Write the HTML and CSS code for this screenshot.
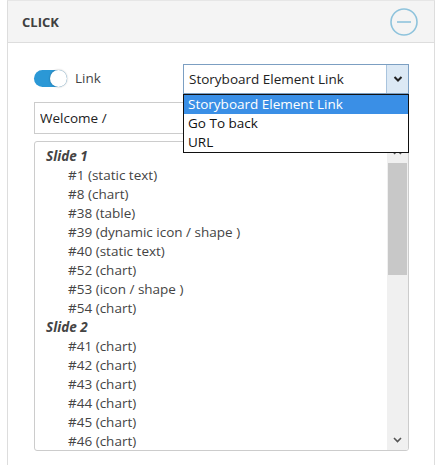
FILE: index.html
```html
<!DOCTYPE html>
<html>
<head>
    <title>Click action</title>
    <link rel="stylesheet" href="styles.css">
</head>
<body>
    <div class="panel">
        <div class="panel-head">
            <span class="panel-title">CLICK</span>
            <svg class="collapse" width="30" height="30" viewBox="0 0 30 30">
                <circle cx="15" cy="15" r="13" fill="none" stroke="#8ec3dc" stroke-width="1.6"/>
                <line x1="8" y1="15" x2="22" y2="15" stroke="#8ec3dc" stroke-width="1.6"/>
            </svg>
        </div>

        <div class="panel-body">
            <div class="link-row">
                <label class="switch-label">
                    <span class="switch"><span class="knob"></span></span>
                    Link
                </label>
                <div class="picker">
                    <div class="picker-box">
                        <span class="picker-value">Storyboard Element Link</span>
                        <span class="picker-arrow">
                            <svg width="10" height="8" viewBox="0 0 10 8">
                                <path d="M1.5 2 L5 5.5 L8.5 2" fill="none" stroke="#222" stroke-width="2"/>
                            </svg>
                        </span>
                    </div>
                    <ul class="picker-menu">
                        <li class="active">Storyboard Element Link</li>
                        <li>Go To back</li>
                        <li>URL</li>
                    </ul>
                </div>
            </div>

            <input type="text" class="path-input" value="Welcome /">

            <div class="element-list">
                <div class="list-items">
                    <div class="group">Slide 1</div>
                    <div class="item">#1 (static text)</div>
                    <div class="item">#8 (chart)</div>
                    <div class="item">#38 (table)</div>
                    <div class="item">#39 (dynamic icon / shape )</div>
                    <div class="item">#40 (static text)</div>
                    <div class="item">#52 (chart)</div>
                    <div class="item">#53 (icon / shape )</div>
                    <div class="item">#54 (chart)</div>
                    <div class="group">Slide 2</div>
                    <div class="item">#41 (chart)</div>
                    <div class="item">#42 (chart)</div>
                    <div class="item">#43 (chart)</div>
                    <div class="item">#44 (chart)</div>
                    <div class="item">#45 (chart)</div>
                    <div class="item">#46 (chart)</div>
                </div>
                <div class="scrollbar">
                    <span class="scroll-btn">
                        <svg width="9" height="6" viewBox="0 0 9 6"><path d="M1 5 L4.5 1.5 L8 5" fill="none" stroke="#555" stroke-width="1.6"/></svg>
                    </span>
                    <div class="scroll-track"><div class="scroll-thumb"></div></div>
                    <span class="scroll-btn">
                        <svg width="9" height="6" viewBox="0 0 9 6"><path d="M1 1 L4.5 4.5 L8 1" fill="none" stroke="#555" stroke-width="1.6"/></svg>
                    </span>
                </div>
            </div>
        </div>
    </div>
</body>
</html>
```

FILE: styles.css
```css
body {
    margin: 0;
    background: #fff;
    font-family: "Open Sans", "DejaVu Sans", sans-serif;
    color: #444;
}
.panel {
    margin: 0 1px 0 7px;
    border: 1px solid #ddd;
    border-top-color: #e6e6e6;
    height: 480px;
}
.panel-head {
    display: flex;
    align-items: center;
    justify-content: space-between;
    height: 41px;
    padding: 0 15px 0 14px;
    background: #f4f4f4;
    border-bottom: 1px solid #ddd;
}
.panel-title {
    font-size: 13px;
    font-weight: bold;
    color: #3f3f3f;
}
.collapse {
    display: block;
}
.panel-body {
    padding: 21px 25px 0 26px;
}
.link-row {
    display: grid;
    grid-template-columns: 149px 1fr;
    align-items: center;
    height: 30px;
}
.switch-label {
    display: flex;
    align-items: center;
    gap: 8px;
    font-size: 13.5px;
    margin-top: -2px;
}
.switch {
    position: relative;
    width: 33px;
    height: 17px;
    border-radius: 9px;
    background: #2b98d6;
}
.knob {
    position: absolute;
    right: 0;
    top: 0;
    width: 17px;
    height: 17px;
    border-radius: 50%;
    background: #fff;
    box-shadow: 0 0 2px rgba(0, 0, 0, 0.35);
}
.picker {
    position: relative;
}
.picker-box {
    display: flex;
    height: 30px;
    border: 1px solid #7c9fc2;
    box-sizing: border-box;
    background: #fff;
}
.picker-value {
    flex: 1;
    padding-left: 5px;
    font-size: 13.5px;
    line-height: 28px;
    color: #222;
}
.picker-arrow {
    display: flex;
    align-items: center;
    justify-content: center;
    width: 21px;
    background: #dce9f5;
    border-left: 1px solid #a9c4de;
}
.picker-menu {
    position: absolute;
    left: 0;
    right: 0;
    top: 30px;
    margin: 0;
    padding: 0;
    list-style: none;
    background: #fff;
    border: 1px solid #111;
    z-index: 2;
}
.picker-menu li {
    height: 19px;
    padding-left: 4px;
    font-size: 13.5px;
    line-height: 19px;
    color: #111;
}
.picker-menu li.active {
    background: #3a8fe6;
    color: #fff;
}
.path-input {
    display: block;
    box-sizing: border-box;
    width: 100%;
    height: 32px;
    margin-top: 8px;
    padding: 0 5px;
    border: 1px solid #ccc;
    font-family: inherit;
    font-size: 13.5px;
    color: #222;
}
.element-list {
    display: flex;
    height: 310px;
    margin-top: 7px;
    border: 1px solid #ccc;
    border-radius: 3px;
    box-sizing: border-box;
    overflow: hidden;
}
.list-items {
    flex: 1;
    padding-top: 5px;
    overflow: hidden;
}
.group {
    padding-left: 11px;
    font-size: 13.5px;
    line-height: 19px;
    font-weight: bold;
    font-style: italic;
}
.item {
    padding-left: 33px;
    font-size: 13.5px;
    line-height: 19px;
}
.scrollbar {
    display: flex;
    flex-direction: column;
    width: 21px;
    background: #f0f0f0;
}
.scroll-btn {
    display: flex;
    align-items: center;
    justify-content: center;
    height: 20px;
}
.scroll-track {
    flex: 1;
}
.scroll-thumb {
    height: 112px;
    margin: 1px 1px 0 1px;
    background: #c8c8c8;
}
```
